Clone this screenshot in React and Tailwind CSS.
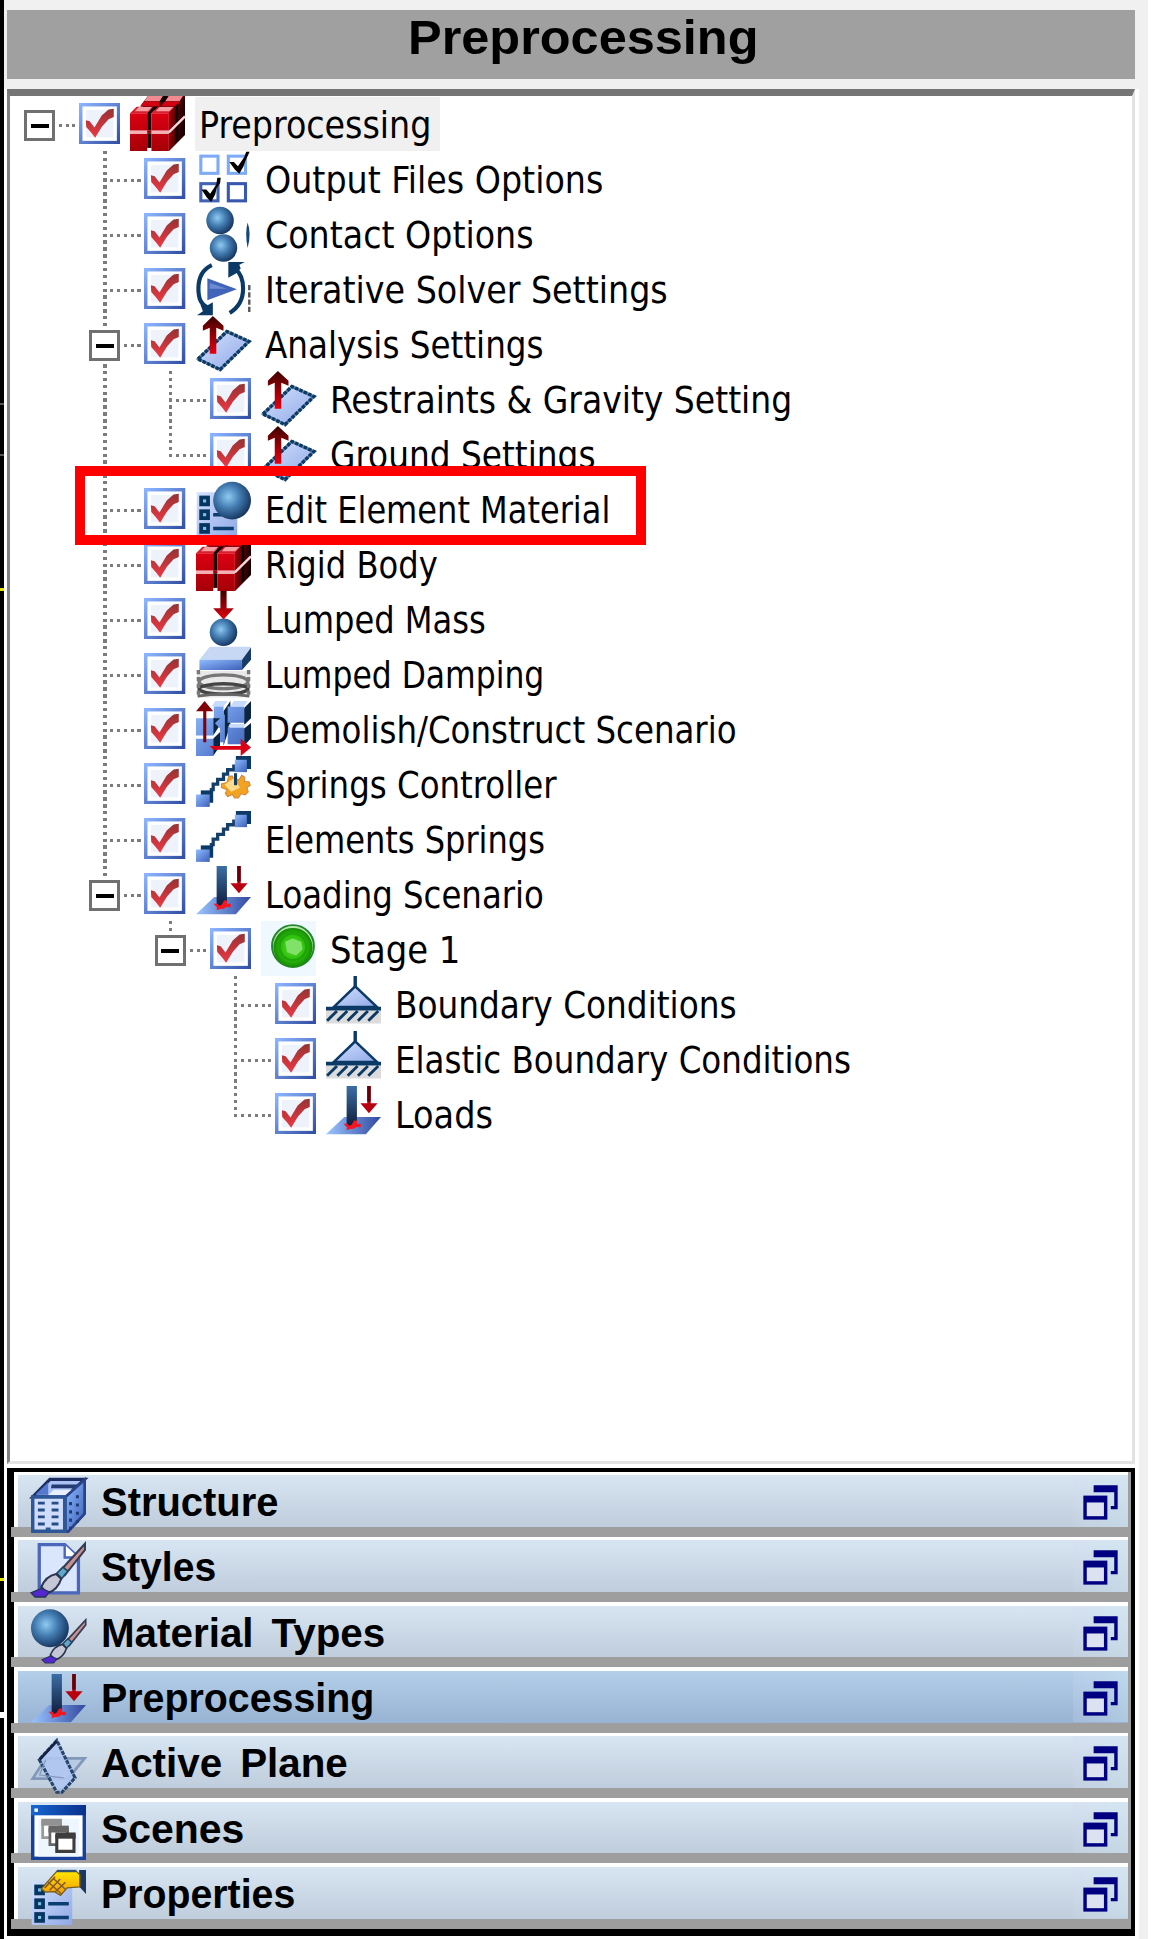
import React, { useLayoutEffect, useRef, useState } from "react";

const NAVY = "#0b3a66";

/* Text stretched or squeezed horizontally to a known width. */
function FitText({ width, className, children }) {
  const ref = useRef(null);
  const [scale, setScale] = useState(1);
  useLayoutEffect(() => {
    if (ref.current) setScale(width / ref.current.offsetWidth);
  }, [width]);
  return (
    <span
      ref={ref}
      className={"inline-block origin-left whitespace-pre " + className}
      style={{ transform: `scaleX(${scale})` }}
    >
      {children}
    </span>
  );
}

function Defs() {
  return (
    <svg className="absolute h-0 w-0" aria-hidden="true">
      <defs>
        <linearGradient id="boxEdge" x1="0" y1="0" x2="1" y2="1">
          <stop offset="0" stopColor="#8ab4ff" />
          <stop offset="1" stopColor="#3350a4" />
        </linearGradient>
        <linearGradient id="tick" x1="0" y1="0" x2="0" y2="1">
          <stop offset="0" stopColor="#8e2424" />
          <stop offset="1" stopColor="#ee2a36" />
        </linearGradient>
        <radialGradient id="ball" cx="0.4" cy="0.4" r="0.62">
          <stop offset="0" stopColor="#8fcaf2" />
          <stop offset="0.5" stopColor="#427bb0" />
          <stop offset="1" stopColor="#173761" />
        </radialGradient>
        <linearGradient id="redFace" x1="0" y1="0" x2="0" y2="1">
          <stop offset="0" stopColor="#dc0012" />
          <stop offset="1" stopColor="#a50008" />
        </linearGradient>
        <linearGradient id="redSide" x1="0" y1="0" x2="1" y2="0.3">
          <stop offset="0" stopColor="#a8000a" />
          <stop offset="0.55" stopColor="#5a0005" />
          <stop offset="1" stopColor="#140001" />
        </linearGradient>
        <linearGradient id="redUp" x1="0" y1="0" x2="0" y2="1">
          <stop offset="0" stopColor="#3d0000" />
          <stop offset="1" stopColor="#e8000f" />
        </linearGradient>
        <linearGradient id="plane" x1="0" y1="0" x2="1" y2="1">
          <stop offset="0" stopColor="#d3e2ff" />
          <stop offset="1" stopColor="#90a8e6" />
        </linearGradient>
        <linearGradient id="blueFace" x1="0" y1="0" x2="1" y2="1">
          <stop offset="0" stopColor="#8fbcff" />
          <stop offset="1" stopColor="#3c5fb8" />
        </linearGradient>
        <linearGradient id="floor" x1="0" y1="0" x2="1" y2="0">
          <stop offset="0" stopColor="#9cc6ff" />
          <stop offset="1" stopColor="#3048a0" />
        </linearGradient>
        <linearGradient id="column" x1="0" y1="0" x2="0" y2="1">
          <stop offset="0" stopColor="#3b6ea5" />
          <stop offset="1" stopColor="#101c3c" />
        </linearGradient>
        <radialGradient id="green" cx="0.5" cy="0.5" r="0.5">
          <stop offset="0" stopColor="#5fd83d" />
          <stop offset="0.6" stopColor="#2fc20a" />
          <stop offset="1" stopColor="#168a06" />
        </radialGradient>
        <linearGradient id="gold" x1="0" y1="0" x2="0" y2="1">
          <stop offset="0" stopColor="#ffe600" />
          <stop offset="1" stopColor="#f59a00" />
        </linearGradient>
        <linearGradient id="titleBlue" x1="0" y1="0" x2="1" y2="0">
          <stop offset="0" stopColor="#1667d0" />
          <stop offset="1" stopColor="#0a2f8c" />
        </linearGradient>
      </defs>
    </svg>
  );
}

const Svg = ({ children }) => (
  <svg viewBox="0 0 16 16" className="h-[55px] w-[55px] shrink-0 overflow-visible">
    {children}
  </svg>
);

const Cubes = () => (
  <Svg>
    <path d="M3 3L5.2 0H16V11.3L11.3 16V5Z" fill="#4a0004" />
    <path d="M5.2 0H9.6L8.6 1.5H4.2Z M11.2 0H15.4L14.4 1.5H10.2Z" fill="#f08a90" />
    <path d="M4 1.6H8.6V3H3Z M10 1.6H14.4V3H9Z" fill="#d20010" />
    <path d="M9.6 0H11.2L10 1.8H8.6Z" fill="#120001" />
    <path d="M1.9 3.1H6.8L5 5H0Z M8.1 3.1H13L11.3 5H6.2Z" fill="#d6202e" />
    <path d="M2.6 3.2H6.4L5.2 4.4H1.4Z M8.6 3.2H12.6L11.4 4.4H7.5Z" fill="#f3a0a5" />
    <path d="M5 5L6.8 3.1H8.1L6.2 5V16L5 16Z" fill="#1d0002" />
    <path d="M11.3 5L16 .3V5.6L11.3 10.3Z M11.3 11L16 6.3V11.3L11.3 16Z" fill="url(#redSide)" />
    <path d="M13.2 2.9L14 2.1V12.9L13.2 13.9Z" fill="#0c0000" />
    <path d="M11.3 10.6L16 5.9" stroke="#ffd8da" strokeWidth=".7" />
    <path d="M0 10.4H11.3" stroke="#f7b0b4" strokeWidth=".8" />
    <path d="M0 5H5V10H0Z M6.2 5H11.3V10H6.2Z M0 11H5V16H0Z M6.2 11H11.3V16H6.2Z" fill="url(#redFace)" />
    <path d="M5 10.4H6.2" stroke="#8d0008" strokeWidth=".7" />
    <path d="M5 15.1H6.2V16H5Z" fill="#fff" />
  </Svg>
);

const Output = () => (
  <Svg>
    <g fill="#fff" strokeWidth=".9">
      <rect x="1.4" y="1.5" width="5" height="5" stroke="#7eabf5" />
      <rect x="9.4" y="1.5" width="5" height="5" stroke="#7eabf5" />
      <rect x="1.4" y="9.5" width="5" height="5" stroke="#4263b4" />
      <rect x="9.4" y="9.5" width="5" height="5" stroke="#3858ae" />
    </g>
    <path d="M9.7 3.2H11L12.2 4.4L13 3.3L14 1.8L14.6.2H15.6L15 1.5L14.4 2.8L13.8 4.5L12.6 6.6L11.3 5.4Z M1.6 11.2H3L4.1 12.4L5.2 10.8L5.9 9.7L6.2 7.8H7.2L7 9.4L6 10.8L5.6 12.6L4.4 14.8L3.2 13.6Z" fill="#000" />
  </Svg>
);

const Contact = () => (
  <Svg>
    <circle cx="7" cy="4.2" r="4" fill="url(#ball)" />
    <circle cx="8" cy="12.2" r="4" fill="url(#ball)" />
    <path d="M15 4.8Q14.2 8 15 12.2Q16.2 8 15 4.8Z" fill="#164674" />
  </Svg>
);

const Iterative = () => (
  <Svg>
    <g fill="none" stroke={NAVY} strokeWidth="1.2">
      <path d="M4.6 1.2C1.8 2.5.7 5 .7 8S1.4 12.5 3.4 13.6" />
      <path d="M9.8 15.1C12.6 13.4 13.7 11 13.7 8S12.8 3.4 11.4 2.3" />
    </g>
    <path d="M9.4.3H14.2L12.6 1.1L13 2.2L11.6 3.6L9.4 4.9Z M.3 15.8H4.9V12L3 13.1L1.3 12.7L2 14.6Z" fill={NAVY} />
    <path d="M3.3 5L11.9 8.2L3.3 11.4Z" fill="#4163b8" />
    <path d="M4 6.4L9 8.1H4Z" fill="#6c8bd4" />
    <path d="M15.5 7V15" stroke="#555" strokeWidth=".7" strokeDasharray="1.5 .6" />
  </Svg>
);

const PlaneArrow = () => (
  <Svg>
    <path d="M.6 12.5L9 4.5L15.4 7.4L7 15.6Z" fill="url(#plane)" stroke={NAVY} strokeOpacity=".6" strokeWidth=".8" />
    <path d="M.6 12.5L9 4.5L15.4 7.4L7 15.6Z" fill="none" stroke={NAVY} strokeWidth="1" strokeDasharray="1 .4" />
    <path d="M4 11V3.4L2 4.3V2.8L4.9 0L8 2.8V4.3L5.9 3.4V11Z" fill="url(#redUp)" />
  </Svg>
);

const ListRows = () => (
  <g>
    <path d="M.2 3.3H12V16H.2Z" fill="url(#plane)" />
    <g fill="#7cc1ee" stroke="#06355f" strokeWidth="1.1">
      <rect x="1.5" y="4.8" width="2" height="2" />
      <rect x="1.5" y="8.8" width="2" height="2" />
      <rect x="1.5" y="12.8" width="2" height="2" />
    </g>
    <path d="M5 9.8H11M5 13.8H11" stroke="#0b3f72" strokeWidth="1" />
  </g>
);

const EditMaterial = () => (
  <Svg>
    <ListRows />
    <circle cx="10.5" cy="5.7" r="5.5" fill="url(#ball)" />
  </Svg>
);

const LumpedMass = () => (
  <Svg>
    <path d="M7.1 0H8.9V5H11L8 8.3L5 5H7.1Z" fill="url(#redUp)" />
    <circle cx="8" cy="12" r="4" fill="url(#ball)" />
  </Svg>
);

const Damping = () => (
  <Svg>
    <path d="M4 .2H16L13.4 4H1Z" fill="#c7d8f5" />
    <path d="M1 4H13.4V7H1Z" fill="url(#blueFace)" />
    <path d="M13.4 4L16 .4V4L13.4 7Z" fill="#153b66" />
    <path d="M.3 7.3H15.7V15H.3Z" fill="#d9d9d9" fillOpacity=".6" />
    <g fill="none" stroke="#777" strokeWidth="1">
      <ellipse cx="8" cy="10.4" rx="7.1" ry="2" />
      <ellipse cx="8" cy="12.5" rx="7.1" ry="1.5" stroke="#444" />
      <path d="M.7 7V15M15.3 7V15" strokeDasharray="1.2 .8" />
    </g>
    <path d="M.5 14.6Q8 13.4 15.5 14.6" stroke="#666" strokeWidth=".8" fill="none" />
  </Svg>
);

const Demolish = () => (
  <Svg>
    <path d="M5 5L7 3V7L5 10Z M5 11L7 9V13L5 16Z M8 3L10 0V7L8 13Z M14 2L16 0V5L14 7Z M14 8L16 6.4V10.8L14 13Z" fill="#0b2644" />
    <path d="M0 5H5V10H0Z M0 11H5V16H0Z M9.2 1.6H14V6.3H9.2Z M9.2 7.7H14V12.6H9.2Z M5.2 1.5H8V4L6.8 5H5.2Z M5.5 6.5L7 5V8Z M7 4H8.4V12H7Z" fill="url(#blueFace)" />
    <path d="M5.6 0H9.2L8 1.6H4.6Z M11 0H15L14 1.6H10Z M9.8 6.7H14.5L14 7.6H9.3Z" fill="#c7dbff" />
    <path d="M2.1 12V3H0L2.5 0L5 3H3V12Z" fill="#820007" />
    <path d="M4 13.1H13V11L16 13.5L13 16V14.2H5Z" fill="#dc0014" />
  </Svg>
);

const SpringLine = () => (
  <g>
    <path d="M4 9.8H5V8.2H6.3V6.8H8V5.3H9.2V4H11V2.5" fill="none" stroke="#153f6b" strokeWidth=".95" />
    <path d="M11.6 0H16V3.8H14.8V4.5H11.6Z" fill={NAVY} />
    <path d="M11.3 1.1H14.8V4.7H11.3Z" fill="url(#blueFace)" />
    <path d="M1.4 10H5V13.6H1.4Z" fill={NAVY} />
    <path d="M0 11.2H4V14.8H0Z" fill="url(#blueFace)" />
  </g>
);

const Springs = () => (
  <Svg>
    <SpringLine />
  </Svg>
);

const SpringsGear = () => (
  <Svg>
    <SpringLine />
    <path d="M9.5 6L10.5 5.8L11.2 7L12.6 6.8L13.3 5.6L14.2 6.2L14.1 7.4L15.4 7.5L15.8 8.5L14.8 9.2L15.2 10.4L14.3 11.3L13.1 11L12.3 12.2L11.2 12.2L10.6 11.2L9.2 11.8L8.5 10.8L9.1 9.8L7.4 9.2V8.1L9 7.7Z" fill="#f1a321" stroke="#cf8740" strokeWidth=".3" />
    <path d="M8.3 8.4L11 6.5L12.8 9.2L10.2 10.4Z" fill="#ffdc8c" />
    <path d="M11.5 5V8.5" stroke="#153f6b" strokeWidth=".9" />
  </Svg>
);

const Loading = () => (
  <Svg>
    <path d="M5.3 9H16L11.6 14H0Z" fill="url(#floor)" />
    <path d="M6 0H9V11.8H6Z" fill="url(#column)" />
    <path d="M12 0H13V5H15L12.5 7.9L10 5H12Z" fill="#b90010" />
    <path d="M12 0H13V4.5H12Z" fill="#650008" />
    <path d="M5.1 11H6.3L6.8 11.6L7.5 11.2L8.2 10H9.1L9 11H10.1V12L8.8 11.9L8.1 12.4L7 12.5L6 12.9L6.1 12Z" fill="#f51620" />
  </Svg>
);

const Stage = () => (
  <Svg>
    <rect width="16" height="16" fill="#eff7ff" />
    <circle cx="9.3" cy="7.3" r="6.1" fill="#b9e8b0" stroke="#23862a" strokeWidth=".55" />
    <circle cx="9.3" cy="7.7" r="5.7" fill="url(#green)" />
    <circle cx="9.3" cy="7.5" r="3.9" fill="none" stroke="#1fa50c" strokeWidth=".7" />
    <path d="M7 6L9.2 5.1L11.7 6L12.1 8.2L10.2 10L7.6 9.1Z" fill="#80e268" />
  </Svg>
);

const Boundary = () => (
  <Svg>
    <path d="M0 10H16V13.8H0Z" fill="#dcdcdc" />
    <path d="M8.5 3L14.8 9H2.3Z" fill="url(#plane)" stroke={NAVY} strokeWidth=".75" />
    <path d="M8.5 0V3.5" stroke={NAVY} strokeWidth="1" />
    <path d="M0 9.5H16" stroke={NAVY} strokeWidth="1.1" />
    <path d="M.3 13L3.2 10.2M3.3 13L6.2 10.2M6.3 13L9.2 10.2M9.3 13L12.2 10.2M12.3 13L15.2 10.2" stroke={NAVY} strokeWidth=".85" />
  </Svg>
);

const Building = () => (
  <Svg>
    <path d="M.5 5.5L5.5.4H15.6L10 5.5Z" fill="#a9c1f3" stroke="#1d2c62" strokeWidth=".9" />
    <path d="M1.2 4.9L5 1.2V4.9Z" fill="#5479cc" />
    <path d="M6 1.9H14L13 3H5.8Z" fill="#253a72" />
    <path d="M6.6 3.4H12L10.8 5H5Z" fill="#e8f0ff" />
    <path d="M10 5.5L15.6.5V10.4L10.8 15.6H10Z" fill="url(#blueFace)" stroke="#28438a" strokeWidth=".8" />
    <path d="M.5 5.5H9.8V15.5H.5Z" fill="#cfdcfa" stroke="#2e5795" strokeWidth="1" />
    <path d="M2 7.3H4M6 7.3H8M2 9.3H4M6 9.3H8M2 11.3H4M6 11.3H8M2 13.4H4M6 13.4H8" stroke="#264d84" strokeWidth=".85" />
    <path d="M11.5 7V15M13.5 5V13" stroke="#1e3b78" strokeWidth=".85" strokeDasharray=".9 1.5" />
    <path d="M4.3 14.4H5.7V15.6H4.3Z" fill="#2d5795" />
  </Svg>
);

const Brush = () => (
  <g>
    <path d="M8.3 8.3L15.7.2V2L9.8 9.4Z" fill="#c9918c" stroke="#333d58" strokeWidth=".6" />
    <path d="M7.5 8.8L9.3 7L10.7 8.2L8.9 10.4Z" fill="#63a7c7" stroke="#244563" strokeWidth=".5" />
    <path d="M3 12.8Q4.3 9.6 7.3 9L8.8 10.4Q7.8 13.6 4.8 14.6Z" fill="#c5c7d7" stroke="#2c3450" strokeWidth=".6" />
    <path d="M0 14.5L3 13.2L5.3 14.2L4.2 15.7H1.2Z" fill="#5427d0" stroke="#24345e" strokeWidth=".4" />
  </g>
);

const StylesIcon = () => (
  <Svg>
    <path d="M2.4.5H9.8L13.8 4.2V14.5H2.4Z" fill="#dae6fc" stroke="#4a67bb" strokeWidth=".95" />
    <path d="M9.8.5V4.2H13.8" fill="#fff" stroke="#4a67bb" strokeWidth=".7" />
    <Brush />
  </Svg>
);

const MaterialIcon = () => (
  <Svg>
    <circle cx="5.5" cy="5.6" r="5.5" fill="url(#ball)" />
    <g transform="translate(3.2 3) scale(.81)">
      <Brush />
    </g>
  </Svg>
);

const ActivePlane = () => (
  <Svg>
    <path d="M4.3 5.6H15.6L10.8 11.5H.5Z" fill="#b9cae3" stroke="#8198b9" strokeWidth=".8" />
    <path d="M7.5.4L2.4 6L7.5 15.5H9L12.8 11.3Z" fill="#b0c6ef" fillOpacity=".9" stroke="#24466f" strokeWidth=".9" strokeDasharray="1.2 .3" />
    <path d="M7.5.6L2.5 6" stroke="#152143" strokeWidth=".8" />
    <path d="M4.3 6L2.5 10.5L9.5 11.3" stroke="#8198b9" strokeWidth=".35" fill="none" />
  </Svg>
);

const ScenesIcon = () => (
  <Svg>
    <rect x=".5" y=".5" width="15" height="15" fill="#fff" stroke="#173f9c" />
    <rect x="0" y="0" width="16" height="3" fill="url(#titleBlue)" />
    <rect x="1" y="1" width="1" height="1" fill="#fff" />
    <path d="M2 4H14V15H2Z" fill="#eef6ff" />
    <g fill="#fff">
      <path d="M3.4 5H8.6V9.5H3.4Z" stroke="#999" strokeWidth=".8" />
      <path d="M3 4H9V6H3Z" fill="#929292" />
      <path d="M5.5 7H10.6V11.5H5.5Z" stroke="#666" strokeWidth=".8" />
      <path d="M5.1 6H11V8H5.1Z" fill="#666" />
      <path d="M7.5 9H12.5V13.5H7.5Z" stroke="#3d3d3d" strokeWidth=".9" />
      <path d="M7.1 8H13V9.8H7.1Z" fill="#3d3d3d" />
    </g>
  </Svg>
);

const PropertiesIcon = () => (
  <Svg>
    <ListRows />
    <path d="M14 1V0H16V7L14.2 5Z" fill="#1c3861" />
    <path d="M3 5.5L6.5 1.5L7.5.4H13.2L14.2 1.4V4.9L10.5 5.2L8.6 7.4L6.8 6.3L4.2 6.4Z" fill="url(#gold)" stroke="#776021" strokeWidth=".4" />
    <path d="M4 5.2L7 2M5.4 5.9L8.5 2.6M7 6.4L10 3.6M5 3.5L8.8 6.9M6.4 2.4L10 5.6" stroke="#865b26" strokeWidth=".45" />
    <path d="M7.5.3H13.2" stroke="#315270" strokeWidth=".7" />
  </Svg>
);

function Check() {
  return (
    <svg viewBox="0 0 12 12" className="h-[41.3px] w-[41.3px] shrink-0">
      <rect x=".5" y=".5" width="11" height="11" fill="#fff" stroke="url(#boxEdge)" />
      <rect x="2" y="2" width="8" height="8" fill="#eef2fb" />
      <path d="M2 5L3.1 5.3L4.5 7.1L6.6 3.6L8.6 1.9L10.1 1.7L10.1 4.1L8.6 4.7L6.7 6.8L5.6 8.6L4.7 10.1L3.4 8.4L2.1 7Z" fill="url(#tick)" fillOpacity=".93" />
    </svg>
  );
}

const DOTS_V =
  "w-[3.44px] bg-[repeating-linear-gradient(180deg,#7c7c7c_0px,#7c7c7c_3.4px,transparent_3.4px,transparent_6.875px)]";
const DOTS_H =
  "h-[3.44px] bg-[repeating-linear-gradient(90deg,#7c7c7c_0px,#7c7c7c_3.4px,transparent_3.4px,transparent_6.875px)]";

/* One indentation column: "line" passes through, "tee"/"end" join the row. */
function Guide({ kind, box }) {
  return (
    <div className="relative h-[55px] w-[65.33px] shrink-0">
      {kind !== "none" && kind !== "root" && (
        <div className={"absolute left-[28px] top-0 " + DOTS_V + (kind === "end" ? " h-[31px]" : " h-[55px]")} />
      )}
      {(kind === "tee" || kind === "end" || kind === "root") && (
        <div className={"absolute left-[28px] right-0 top-[27.5px] " + DOTS_H} />
      )}
      {box && (
        <div className="absolute left-[11px] top-[11px] bg-white p-[3px]">
          <div className="flex h-[31px] w-[31px] items-center justify-center border-[3px] border-[#707070] bg-white">
            <div className="h-[4px] w-[18px] bg-black" />
          </div>
        </div>
      )}
    </div>
  );
}

const TREE = [
  [["root"], true, Cubes, "Preprocessing", 232],
  [["none", "tee"], false, Output, "Output Files Options", 338],
  [["none", "tee"], false, Contact, "Contact Options", 269],
  [["none", "tee"], false, Iterative, "Iterative Solver Settings", 403],
  [["none", "tee"], true, PlaneArrow, "Analysis Settings", 279],
  [["none", "line", "tee"], false, PlaneArrow, "Restraints & Gravity Setting", 462],
  [["none", "line", "end"], false, PlaneArrow, "Ground Settings", 266],
  [["none", "tee"], false, EditMaterial, "Edit Element Material", 345],
  [["none", "tee"], false, Cubes, "Rigid Body", 173],
  [["none", "tee"], false, LumpedMass, "Lumped Mass", 221],
  [["none", "tee"], false, Damping, "Lumped Damping", 279],
  [["none", "tee"], false, Demolish, "Demolish/Construct Scenario", 472],
  [["none", "tee"], false, SpringsGear, "Springs Controller", 292],
  [["none", "tee"], false, Springs, "Elements Springs", 280],
  [["none", "end"], true, Loading, "Loading Scenario", 279],
  [["none", "none", "end"], true, Stage, "Stage 1", 130],
  [["none", "none", "none", "tee"], false, Boundary, "Boundary Conditions", 342],
  [["none", "none", "none", "tee"], false, Boundary, "Elastic Boundary Conditions", 456],
  [["none", "none", "none", "end"], false, Loading, "Loads", 98],
];

function TreeRow({ row, selected }) {
  const [guides, box, Icon, label, width] = row;
  return (
    <div className="flex h-[55px] items-center">
      {guides.map((kind, i) => (
        <Guide key={i} kind={kind} box={box && i === guides.length - 1} />
      ))}
      <div className="ml-[3.8px] flex">
        <Check />
      </div>
      <div className="ml-[10px] flex">
        <Icon />
      </div>
      <div className={"ml-[10px] h-[54px] overflow-visible pl-[4px] " + (selected ? "w-[245px] bg-[#f0f0f0]" : "w-[500px]")}>
        <FitText
          width={width}
          className="font-['DejaVu_Sans_Condensed','DejaVu_Sans',sans-serif] text-[37.7px] leading-[56px] text-black"
        >
          {label}
        </FitText>
      </div>
    </div>
  );
}

const BARS = [
  [Building, "Structure", 177],
  [StylesIcon, "Styles", 115],
  [MaterialIcon, "Material Types", 284],
  [Loading, "Preprocessing", 273],
  [ActivePlane, "Active Plane", 247],
  [ScenesIcon, "Scenes", 143],
  [PropertiesIcon, "Properties", 194],
];

function RestoreIcon() {
  return (
    <div className="h-[51.5px] w-[55px] bg-gradient-to-r from-[#d4d8f0]/20 to-[#cfe8f2]/40">
      <svg viewBox="0 0 16 15" className="h-[51.5px] w-[55px]">
        <path d="M6 3H13V10H11V9H12V5H6Z" fill="#000080" />
        <path d="M3 6H10V13H3Z" fill="#000080" />
        <path d="M4 8H9V12H4Z" fill="#dce2ef" />
      </svg>
    </div>
  );
}

function Bar({ bar, active }) {
  const [Icon, label, width] = bar;
  return (
    <div className="h-[65.33px] shrink-0 bg-white pt-[3.5px]">
      <div
        className={
          "relative z-10 ml-[3.5px] flex h-[51.8px] items-start bg-gradient-to-b " +
          (active ? "from-[#b4cfe9] to-[#98b3d3]" : "from-[#d8e5f2] to-[#bfcddc]")
        }
      >
        <div className="ml-[13.5px] mt-[3px] flex">
          <Icon />
        </div>
        <div className="ml-[15px] w-[400px]">
          <FitText width={width} className="font-['Liberation_Sans',Arial,sans-serif] text-[41.5px] font-bold leading-[53px] text-black [word-spacing:7px]">
            {label}
          </FitText>
        </div>
        <div className="ml-auto flex">
          <RestoreIcon />
        </div>
      </div>
      <div className="-ml-[3px] h-[10px] bg-[#9e9e9e]" />
    </div>
  );
}

export default function App() {
  return (
    <div className="relative flex h-[1939px] w-[1152px] overflow-hidden bg-white">
      <Defs />
      <div className="flex w-[3.5px] shrink-0 flex-col bg-black">
        <div className="mt-[403px] h-[2px] shrink-0 bg-[#555]" />
        <div className="mt-[49px] h-[2px] shrink-0 bg-[#555]" />
        <div className="mt-[132px] h-[3px] shrink-0 bg-[#e6e600]" />
        <div className="mt-[987px] h-[3px] shrink-0 bg-[#e6e600]" />
        <div className="mt-[131px] h-[6px] shrink-0 bg-white" />
      </div>
      <div className="flex w-[1144.5px] shrink-0 flex-col bg-[#f0f0f0] pl-[3.5px] pt-[10px]">
        <div className="flex h-[69px] w-[1128px] shrink-0 items-start bg-[#a0a0a0] pl-[401px]">
          <FitText width={350} className="font-['Liberation_Sans',Arial,sans-serif] text-[48px] font-bold leading-[56px] text-black">
            Preprocessing
          </FitText>
        </div>
        <div className="-ml-[3.5px] mt-[10px] w-[1135px] shrink-0 bg-white pl-[3.5px]">
          <div className="h-[1375px] w-[1128px] border-b-[3.5px] border-l-[3.5px] border-r-[3.5px] border-t-[7px] border-b-[#e3e3e3] border-l-[#808080] border-r-[#e3e3e3] border-t-[#757575] bg-white">
            {TREE.map((row, i) => (
              <TreeRow key={i} row={row} selected={i === 0} />
            ))}
          </div>
          <div className="mt-[3.5px] h-[468px] w-[1128px] border-b-[7px] border-l-[7px] border-r-[4px] border-t-[4px] border-black bg-[#9e9e9e] pr-[3px]">
            {BARS.map((bar, i) => (
              <Bar key={i} bar={bar} active={i === 3} />
            ))}
          </div>
          <div className="h-[6px]" />
        </div>
      </div>
      <div className="absolute left-[75px] top-[466px] h-[79px] w-[571px] border-[10px] border-[#ff0000]" />
    </div>
  );
}
